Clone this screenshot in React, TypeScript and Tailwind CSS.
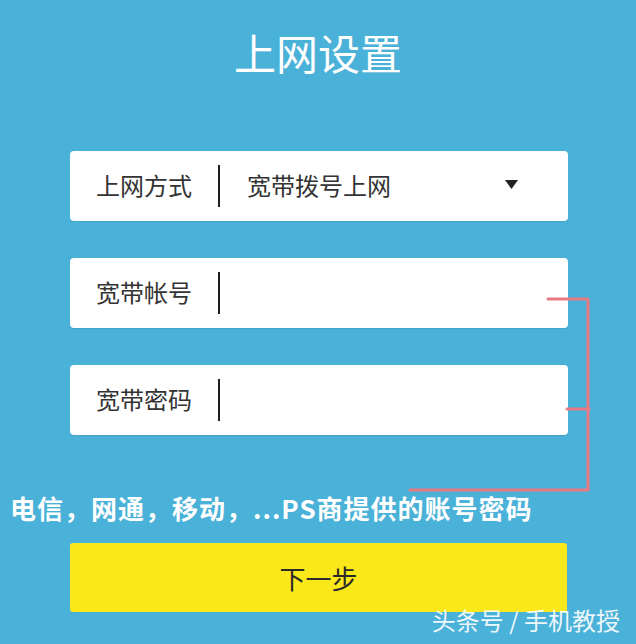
import React from "react";

const font = { fontFamily: '"Noto Sans CJK SC", "Noto Sans", sans-serif' };

function Field({ label, children }: { label: string; children?: React.ReactNode }) {
  return (
    <div className="mx-[70px] flex h-[70px] w-[498px] items-center rounded-[4px] bg-white pl-[26px] pr-[50px] shadow-[0_1px_0_rgba(0,0,0,0.08)]">
      <span className="mb-[3px] w-[96px] text-[24px] leading-none text-[#333]">{label}</span>
      <div className="ml-[26px] h-[42px] w-[2px] bg-[#1e1e1e]" />
      {children}
    </div>
  );
}

export default function App() {
  return (
    <div
      className="relative flex h-[644px] w-[636px] flex-col overflow-hidden bg-[#4ab1d8]"
      style={font}
    >
      <h1 className="mt-[31px] text-center text-[42px] font-normal leading-none tracking-[0px] text-white">
        上网设置
      </h1>

      <div className="mt-[78px] flex flex-col gap-[37px]">
        <Field label="上网方式">
          <span className="mb-[3px] ml-[27px] flex-1 text-[24px] leading-none text-[#333]">宽带拨号上网</span>
          <svg width="13" height="9" viewBox="0 0 13 9" className="mb-[4px]">
            <polygon points="0,0 13,0 6.5,9" fill="#222" />
          </svg>
        </Field>
        <Field label="宽带帐号" />
        <Field label="宽带密码" />
      </div>

      <p className="mt-[60px] ml-[10px] whitespace-nowrap text-[26px] font-bold leading-none tracking-[1px] text-white">
        电信，网通，移动，...PS商提供的账号密码
      </p>

      <button className="mx-[70px] mt-[22px] flex h-[69px] w-[497px] items-center justify-center rounded-[3px] bg-[#fbe81b] text-[26px] leading-none text-[#2a2a2a]">
        下一步
      </button>

      <svg
        className="pointer-events-none absolute left-0 top-0"
        width="636"
        height="644"
        viewBox="0 0 636 644"
      >
        <path
          d="M548 299 L588 299 L588 490 L410 490 M567 409 L589 409"
          fill="none"
          stroke="#e87a84"
          strokeWidth="3"
          strokeLinecap="round"
          strokeLinejoin="round"
        />
      </svg>

      <span className="absolute right-[16px] top-[608px] whitespace-nowrap text-[24px] leading-none text-white/90">
        头条号 / 手机教授
      </span>
    </div>
  );
}
